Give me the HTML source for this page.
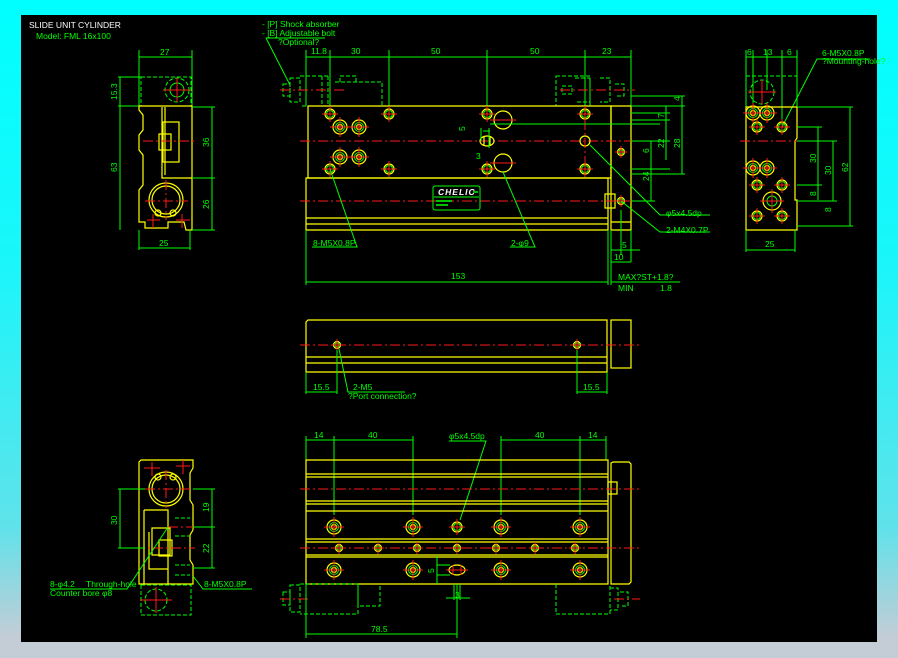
<!DOCTYPE html>
<html><head><meta charset="utf-8">
<style>
html,body{margin:0;padding:0;}
body{width:898px;height:658px;overflow:hidden;background:linear-gradient(180deg,#00ffff 0%,#1af6fa 40%,#5fe2ea 80%,#c4ccd6 97%,#c4ccd6 100%);position:relative;}
#c{position:absolute;left:21px;top:15px;width:856px;height:627px;background:#000;}
svg{position:absolute;left:0;top:0;}
text{font-family:"Liberation Sans",sans-serif;font-size:8.5px;}
.g{stroke:#00ff00;fill:none;stroke-width:1}
.y{stroke:#ffff00;fill:none;stroke-width:1.2}
.r{stroke:#ff1a1a;fill:none;stroke-width:1;stroke-dasharray:10 3 2 3}
.rs{stroke:#ff1a1a;fill:none;stroke-width:1}
.d{stroke:#00ff00;fill:none;stroke-width:1;stroke-dasharray:4 2}
.t{fill:#00ff00}
</style></head><body>
<div id="c"></div>
<svg width="898" height="658" viewBox="0 0 898 658">
<defs>
<g id="h"><circle r="5" class="y" fill="none"/><circle r="3.5" class="g"/><path d="M-8 0H8M0-8V8" class="rs"/></g>
<g id="cb"><circle r="7" class="y"/><circle r="4.5" class="g"/><circle r="2.5" class="y"/><path d="M-10 0H10M0-10V10" class="rs"/></g>
<g id="sh"><circle r="3.5" class="y"/><circle r="2" class="g"/><path d="M-6 0H6M0-6V6" class="rs"/></g>
</defs>
<text x="29" y="28" fill="#fff" font-size="9">SLIDE UNIT CYLINDER</text>
<text x="36" y="39" class="t">Model: FML 16x100</text>
<text x="262" y="27" class="t" font-size="7.5">- [P] Shock absorber</text>
<text x="262" y="36" class="t" font-size="7.5">- [B] Adjustable bolt</text>
<line x1="266" y1="38" x2="325" y2="38" class="g"/>
<text x="278" y="45" class="t" font-size="6.5">?Optional?</text>
<line x1="266" y1="38" x2="290" y2="85" class="g"/>

<g>
<line x1="139" y1="50" x2="139" y2="106" class="g"/><line x1="192" y1="50" x2="192" y2="106" class="g"/>
<line x1="139" y1="57" x2="192" y2="57" class="g"/><text x="160" y="55" class="t">27</text>
<rect x="141" y="77" width="50" height="29" class="d"/>
<circle cx="177" cy="90" r="12" class="d"/><circle cx="177" cy="90" r="7" class="g"/>
<path d="M163 90H191M177 78V102" class="rs"/>
<line x1="118" y1="77" x2="141" y2="77" class="g"/><line x1="118" y1="106" x2="139" y2="106" class="g"/>
<line x1="120" y1="77" x2="120" y2="230" class="g"/>
<text x="0" y="0" class="t" transform="translate(117,100) rotate(-90)">15.3</text>
<text x="0" y="0" class="t" transform="translate(117,172) rotate(-90)">63</text>
<path d="M139 106H192V230H186L184 222H168V228H145V222L139 222V190L143 185V155L139 150V135L143 130V115L139 110Z" class="y"/>
<path d="M162 107V178H192M165 107V175" class="y"/>
<rect x="163" y="122" width="16" height="40" class="y"/><rect x="159" y="134" width="12" height="16" class="y"/>
<circle cx="166" cy="200" r="17" class="y"/><circle cx="166" cy="200" r="14" class="y"/>
<path d="M143 141H196M145 201H188M166 180V220" class="r"/>
<circle cx="158" cy="213" r="3" class="y"/><circle cx="173" cy="213" r="3" class="y"/>
<path d="M147 220H160M153 214V228M176 220H190M182 214V228" class="rs"/>
<line x1="192" y1="107" x2="215" y2="107" class="g"/><line x1="192" y1="178" x2="215" y2="178" class="g"/><line x1="192" y1="230" x2="215" y2="230" class="g"/>
<line x1="212" y1="107" x2="212" y2="230" class="g"/>
<text x="0" y="0" class="t" transform="translate(209,147) rotate(-90)">36</text>
<text x="0" y="0" class="t" transform="translate(209,209) rotate(-90)">26</text>
<line x1="139" y1="230" x2="139" y2="250" class="g"/><line x1="190" y1="230" x2="190" y2="250" class="g"/>
<line x1="139" y1="248" x2="190" y2="248" class="g"/><text x="159" y="246" class="t">25</text>
</g>

<g>
<path d="M306 50V106M330 50V114M389 50V114M487 50V114M585 50V114M631 50V106" class="g"/>
<line x1="306" y1="57" x2="631" y2="57" class="g"/>
<text x="311" y="54" class="t">11.8</text><text x="351" y="54" class="t">30</text>
<text x="431" y="54" class="t">50</text><text x="530" y="54" class="t">50</text><text x="602" y="54" class="t">23</text>
<path d="M283 84H290V96H283ZM290 78H300V102H290ZM300 76H330V106H300M322 76V106M328 76V106M335 82H382V106M340 82V76H356V82" class="d"/>
<path d="M280 90H345" class="r"/>
<path d="M556 76H590V106H556ZM562 86H572V94H562ZM575 78H590V102H575M600 78H610V102H600M615 84H624V96H615" class="d"/>
<path d="M560 90H635" class="r"/>
<path d="M308 106H611V178H308Z" class="y"/>
<path d="M306 178H608V230H306ZM306 218H608M306 224H608" class="y"/>
<path d="M611 106H631V230H611ZM611 222H631" class="y"/>
<rect x="605" y="194" width="10" height="14" class="y"/>
<path d="M300 141H640M300 201H640" class="r"/>
<use href="#h" x="330" y="114"/><use href="#h" x="389" y="114"/><use href="#h" x="487" y="114"/><use href="#h" x="585" y="114"/>
<use href="#h" x="330" y="169"/><use href="#h" x="389" y="169"/><use href="#h" x="487" y="169"/><use href="#h" x="585" y="169"/>
<use href="#cb" x="340" y="127"/><use href="#cb" x="359" y="127"/><use href="#cb" x="340" y="157"/><use href="#cb" x="359" y="157"/>
<circle cx="503" cy="120" r="9" class="y"/><circle cx="503" cy="163" r="9" class="y"/>
<path d="M490 120H516M490 163H516" class="rs"/>
<ellipse cx="487" cy="141" rx="7" ry="5" class="y"/><path d="M484 136V146M490 136V146" class="y"/>
<circle cx="585" cy="141" r="5" class="y"/>
<use href="#sh" x="621" y="152"/><use href="#sh" x="621" y="201"/>
<path d="M585 120V165" class="r"/>
<rect x="433" y="186" width="47" height="24" rx="2" class="g"/>
<line x1="434" y1="197" x2="479" y2="197" class="g"/>
<text x="438" y="195" fill="#fff" font-size="9" font-style="italic" font-weight="bold" letter-spacing="1">CHELIC</text>
<path d="M436 201H452M436 205H448" stroke="#00ff00" stroke-width="1.5"/>
<path d="M473 192H478" stroke="#00ff00" stroke-width="1.5"/>
<path d="M330 169L357 247H312" class="g"/><text x="313" y="246" class="t">8-M5X0.8P</text>
<path d="M503 172L535 247H510" class="g"/><text x="511" y="246" class="t">2-φ9</text>
<path d="M490 124H660M490 131H483M590 145L660 215H710M621 201L660 232H710" class="g"/>
<path d="M489 128V148M481 128V141" class="g"/>
<text x="0" y="0" class="t" transform="translate(465,131) rotate(-90)">5</text>
<text x="476" y="159" class="t">3</text>
<text x="666" y="216" class="t">φ5x4.5dp</text><text x="666" y="233" class="t">2-M4X0.7P</text>
<path d="M631 96H685M631 106H685M631 113H670M631 120H670M631 141H670M631 169H670M631 174H685M631 201H655" class="g"/>
<path d="M682 96V174M666 106V160M651 141V201" class="g"/>
<text x="0" y="0" class="t" transform="translate(680,101) rotate(-90)">4</text>
<text x="0" y="0" class="t" transform="translate(664,118) rotate(-90)">7</text>
<text x="0" y="0" class="t" transform="translate(664,148) rotate(-90)">22</text>
<text x="0" y="0" class="t" transform="translate(680,148) rotate(-90)">28</text>
<text x="0" y="0" class="t" transform="translate(649,153) rotate(-90)">6</text>
<text x="0" y="0" class="t" transform="translate(649,181) rotate(-90)">24</text>
<path d="M306 230V285M608 230V285M611 230V285M631 230V262M621 210V255" class="g"/>
<path d="M306 282H608M611 250H640M611 262H631M611 282H680" class="g"/>
<text x="451" y="279" class="t">153</text>
<text x="622" y="248" class="t">5</text><text x="614" y="260" class="t">10</text>
<text x="618" y="280" class="t">MAX?ST+1.8?</text><text x="618" y="291" class="t">MIN</text><text x="660" y="291" class="t">1.8</text>
</g>

<g>
<path d="M746 50V107M753 50V113M767 50V90M782 50V127M797 50V107" class="g"/>
<line x1="746" y1="57" x2="797" y2="57" class="g"/>
<text x="747" y="55" class="t">6</text><text x="763" y="55" class="t">13</text><text x="787" y="55" class="t">6</text>
<path d="M782 127L817 59H870" class="g"/>
<text x="822" y="56" class="t">6-M5X0.8P</text><text x="822" y="64" class="t" font-size="6">?Mounting-hole?</text>
<rect x="746" y="76" width="51" height="31" class="d"/>
<circle cx="762" cy="92" r="12" class="d"/><path d="M748 92H776M762 80V104" class="rs"/>
<path d="M746 107H797V138L795 141V200H797V230H746Z" class="y"/>
<path d="M740 141H810" class="r"/>
<use href="#cb" x="753" y="113"/><use href="#cb" x="767" y="113"/>
<use href="#h" x="757" y="127"/><use href="#h" x="782" y="127"/>
<use href="#cb" x="753" y="168"/><use href="#cb" x="767" y="168"/>
<use href="#h" x="757" y="185"/><use href="#h" x="782" y="185"/>
<circle cx="772" cy="201" r="9" class="y"/><circle cx="772" cy="201" r="5" class="g"/><path d="M760 201H784M772 189V213" class="rs"/>
<use href="#h" x="757" y="216"/><use href="#h" x="782" y="216"/>
<path d="M797 107H853M797 127H822M797 141H837M797 185H822M797 201H837M797 226H853" class="g"/>
<path d="M850 107V226M818 127V200M833 141V201" class="g"/>
<text x="0" y="0" class="t" transform="translate(816,163) rotate(-90)">30</text>
<text x="0" y="0" class="t" transform="translate(831,175) rotate(-90)">30</text>
<text x="0" y="0" class="t" transform="translate(848,172) rotate(-90)">62</text>
<text x="0" y="0" class="t" transform="translate(816,196) rotate(-90)">8</text>
<text x="0" y="0" class="t" transform="translate(831,212) rotate(-90)">8</text>
<path d="M746 230V252M795 230V252M746 250H795" class="g"/><text x="765" y="247" class="t">25</text>
</g>

<g>
<path d="M306 322L308 320H607V372H306ZM306 357H607M306 363H607" class="y"/>
<rect x="611" y="320" width="20" height="48" class="y"/>
<path d="M300 345H640" class="r"/>
<use href="#sh" x="337" y="345"/><use href="#sh" x="577" y="345"/>
<path d="M306 372V394M337 350V394M577 350V394M607 372V394M306 392H337M577 392H607" class="g"/>
<text x="313" y="390" class="t">15.5</text><text x="583" y="390" class="t">15.5</text>
<path d="M339 349L348 392H405" class="g"/>
<text x="353" y="390" class="t">2-M5</text><text x="348" y="399" class="t" font-size="6.5">?Port connection?</text>
</g>

<g>
<path d="M306 436V460M334 436V515M413 436V515M501 436V515M580 436V515M606 436V460" class="g"/>
<path d="M306 440H413M501 440H606" class="g"/>
<text x="314" y="438" class="t">14</text><text x="368" y="438" class="t">40</text>
<text x="535" y="438" class="t">40</text><text x="588" y="438" class="t">14</text>
<text x="449" y="439" class="t">φ5x4.5dp</text>
<path d="M449 441H486L460 520" class="g"/>
<path d="M306 460H608V584H306ZM306 474H608M306 477H608M306 501H608M306 504H608M306 511H608M306 539H608M306 542H608M306 555H608M306 557H608" class="y"/>
<path d="M611 463L613 462H629L631 464V582L629 584H611Z" class="y"/>
<rect x="608" y="482" width="9" height="12" class="y"/>
<path d="M300 489H640M300 548H640" class="r"/>
<use href="#cb" x="334" y="527"/><use href="#cb" x="413" y="527"/><use href="#h" x="457" y="527"/><use href="#cb" x="501" y="527"/><use href="#cb" x="580" y="527"/>
<use href="#cb" x="334" y="570"/><use href="#cb" x="413" y="570"/><use href="#cb" x="501" y="570"/><use href="#cb" x="580" y="570"/>
<ellipse cx="457" cy="570" rx="8" ry="5" class="y"/><path d="M446 570H468M453 565V575M461 565V575" class="rs"/>
<use href="#sh" x="339" y="548"/><use href="#sh" x="378" y="548"/><use href="#sh" x="417" y="548"/><use href="#sh" x="457" y="548"/><use href="#sh" x="496" y="548"/><use href="#sh" x="535" y="548"/><use href="#sh" x="575" y="548"/>
<path d="M437 556V584M437 565H450M437 575H450" class="g"/><text x="0" y="0" class="t" transform="translate(434,573) rotate(-90)">5</text>
<path d="M454 584V600M460 584V600M446 598H470" class="g"/><text x="455" y="598" class="t">3</text>
<path d="M283 592H290V605H283ZM290 585H300V612H290ZM300 584H358V614H300M358 584V606H380V584" class="d"/>
<path d="M280 599H310" class="r"/>
<path d="M556 584V614H610V584M610 588H618V610H610M620 592H628V606H620" class="d"/>
<path d="M614 599H640" class="r"/>
<path d="M306 584V638M457 584V638M306 634H457" class="g"/><text x="371" y="632" class="t">78.5</text>
</g>

<g>
<path d="M141 460H193V468L190 473V500L193 505V530L190 535V560L193 565V584H139V462Z" class="y"/>
<circle cx="166" cy="489" r="17" class="y"/><circle cx="166" cy="489" r="14" class="y"/>
<path d="M144 510H168V584M144 510V584M149 532V569H168M152 528H170V555H152Z" class="y"/>
<rect x="159" y="540" width="13" height="16" class="y"/>
<circle cx="158" cy="477" r="3" class="y"/><circle cx="173" cy="477" r="3" class="y"/>
<path d="M144 468H160M152 462V476M176 466H190M183 460V474" class="rs"/>
<path d="M145 489H190M166 470V508M135 548H195M168 527H196" class="r"/>
<path d="M175 518H190M175 536H190M175 565H190M175 575H190" class="d"/>
<rect x="141" y="585" width="50" height="30" class="d"/>
<circle cx="156" cy="600" r="11" class="d"/><path d="M140 600H172M156 587V613" class="rs"/>
<path d="M118 489H145M118 548H145M120 489V548" class="g"/>
<text x="0" y="0" class="t" transform="translate(117,525) rotate(-90)">30</text>
<path d="M193 489H215M193 527H215M193 568H215M212 489V568" class="g"/>
<text x="0" y="0" class="t" transform="translate(209,512) rotate(-90)">19</text>
<text x="0" y="0" class="t" transform="translate(209,553) rotate(-90)">22</text>
<path d="M50 589H127L168 527" class="g"/>
<text x="50" y="587" class="t">8-φ4.2</text><text x="86" y="587" class="t" font-size="6.5">Through-hole</text>
<text x="50" y="596" class="t" font-size="6.5">Counter bore  φ8</text>
<path d="M193 576L203 589H252" class="g"/><text x="204" y="587" class="t">8-M5X0.8P</text>
</g>
</svg>
</body></html>
